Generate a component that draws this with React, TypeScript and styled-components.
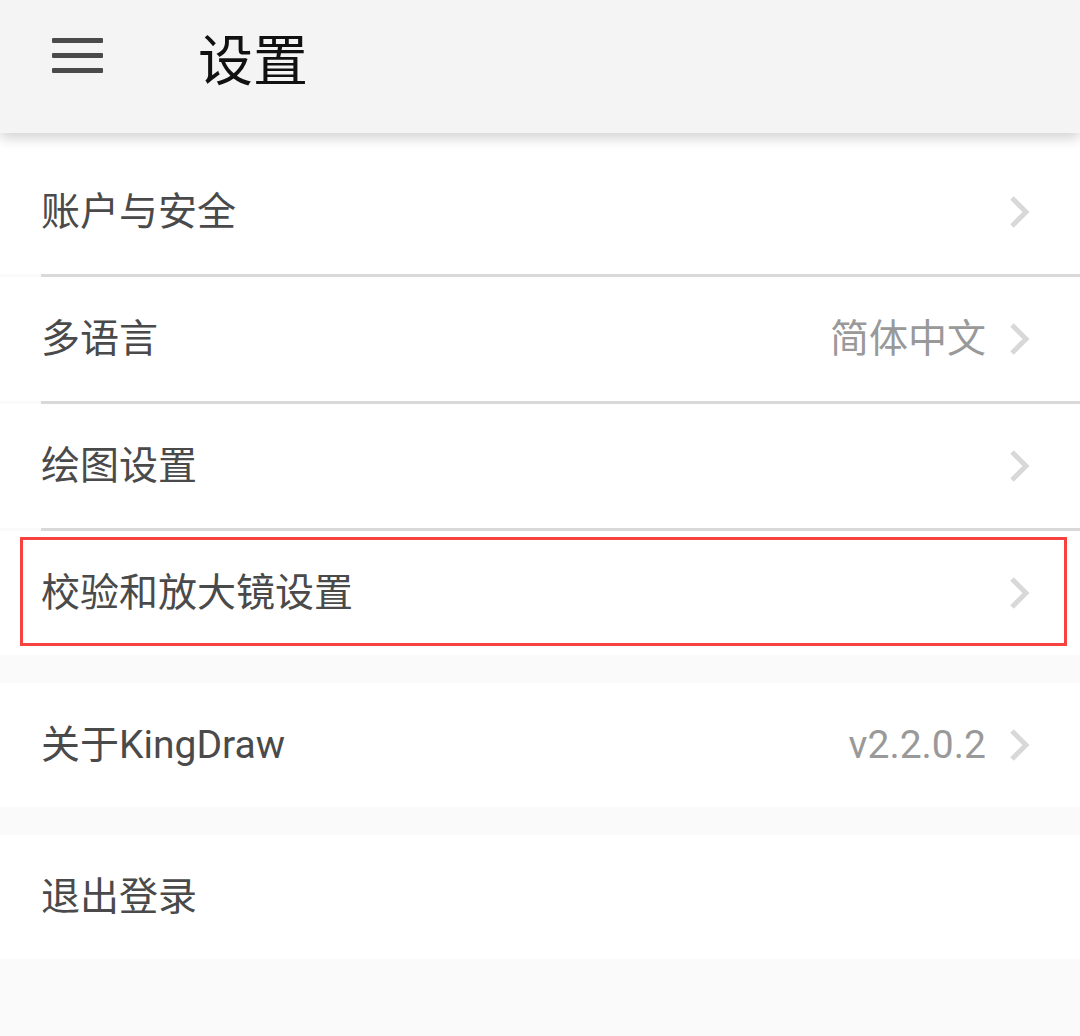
import styled, { createGlobalStyle } from "styled-components";

type Item = {
    label: string
    value?: string
    arrow?: boolean
    highlighted?: boolean
}

const groups: Item[][] = [
    [
        {label: "账户与安全", arrow: true},
        {label: "多语言", value: "简体中文", arrow: true},
        {label: "绘图设置", arrow: true},
        {label: "校验和放大镜设置", arrow: true, highlighted: true},
    ],
    [
        {label: "关于KingDraw", value: "v2.2.0.2", arrow: true},
    ],
    [
        {label: "退出登录"},
    ],
];

export default function App() {
    return (
        <>
            <GlobalStyle/>
            <StyledPage>
                <StyledHeader>
                    <StyledMenuButton aria-label="menu">
                        <span/>
                        <span/>
                        <span/>
                    </StyledMenuButton>
                    <StyledTitle>设置</StyledTitle>
                </StyledHeader>
                <StyledContent>
                    {groups.map((group, gi) => (
                        <StyledGroup key={gi}>
                            {group.map((item, i) => (
                                <div key={item.label}>
                                    {i > 0 && <StyledDivider/>}
                                    <StyledRow $highlighted={item.highlighted}>
                                        <StyledLabel>{item.label}</StyledLabel>
                                        <StyledRight>
                                            {item.value && <StyledValue>{item.value}</StyledValue>}
                                            {item.arrow && <Chevron/>}
                                        </StyledRight>
                                    </StyledRow>
                                </div>
                            ))}
                        </StyledGroup>
                    ))}
                </StyledContent>
            </StyledPage>
        </>
    )
}

function Chevron() {
    return (
        <StyledChevron width="24" height="34" viewBox="0 0 24 34">
            <polyline points="4,3 18,17 4,31" fill="none" stroke="#d8d8d8" strokeWidth="5"/>
        </StyledChevron>
    )
}

const GlobalStyle = createGlobalStyle`
    html, body {
        margin: 0;
        padding: 0;
        background: #fafafa;
    }
    body {
        font-family: Roboto, "Noto Sans CJK SC", sans-serif;
    }
`;

const StyledPage = styled.div`
    width: 1080px;
    min-height: 1036px;
    background: #fafafa;
`;

const StyledHeader = styled.header`
    position: relative;
    z-index: 1;
    height: 133px;
    box-sizing: border-box;
    padding: 0 0 20px 52px;
    display: flex;
    align-items: center;
    gap: 95px;
    background: #f4f4f4;
    box-shadow: 0 5px 12px rgba(0, 0, 0, 0.18);
`;

const StyledMenuButton = styled.div`
    width: 51px;
    display: flex;
    flex-direction: column;
    gap: 10px;
    margin-bottom: 2px;

    span {
        display: block;
        height: 5px;
        border-radius: 1px;
        background: #4a4a4a;
    }
`;

const StyledTitle = styled.h1`
    margin: 0;
    font-size: 55px;
    font-weight: 400;
    color: #111;
    font-family: "Noto Sans CJK SC", sans-serif;
    line-height: 1;
`;

const StyledContent = styled.main`
    padding-top: 17px;
    background: linear-gradient(#fff 17px, transparent 17px);
    display: flex;
    flex-direction: column;
    gap: 28px;
`;

const StyledGroup = styled.section`
    background: #fff;
`;

const StyledDivider = styled.div`
    height: 3px;
    background: linear-gradient(to right, #fafafa 41px, #d9d9d9 41px);
`;

const StyledRow = styled.div<{ $highlighted?: boolean }>`
    position: relative;
    height: 124px;
    box-sizing: border-box;
    padding: 0 48px 0 41px;
    display: flex;
    align-items: center;
    justify-content: space-between;

    &::after {
        content: "";
        display: ${props => props.$highlighted ? "block" : "none"};
        position: absolute;
        top: 6px;
        bottom: 9px;
        left: 20px;
        right: 13px;
        border: 3px solid #f6433f;
    }
`;

const StyledLabel = styled.span`
    font-size: 39px;
    color: #4a4a4a;
    line-height: 1;
`;

const StyledRight = styled.div`
    display: flex;
    align-items: center;
    gap: 22px;
`;

const StyledValue = styled.span`
    font-size: 39px;
    color: #999;
    line-height: 1;
`;

const StyledChevron = styled.svg`
    display: block;
`;
